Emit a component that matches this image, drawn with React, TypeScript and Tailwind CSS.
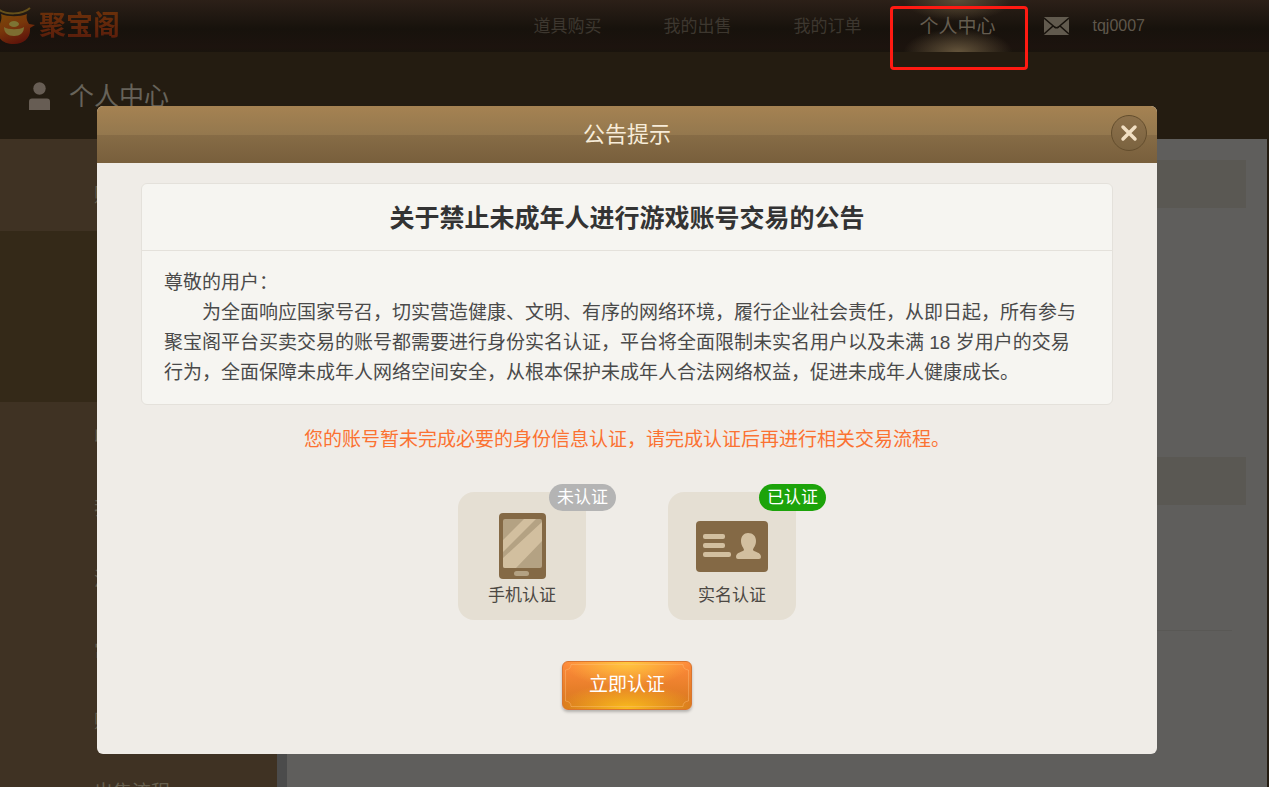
import { useState } from 'react';

const navItems = [
  { name: '道具购买', href: '#props' },
  { name: '我的出售', href: '#sales' },
  { name: '我的订单', href: '#orders' },
];

const sideItems = [
  { name: '收藏夹', href: '#favorites' },
  { name: '我的钱包', href: '#wallet' },
  { name: '消息中心', href: '#messages' },
  { name: '常见问题', href: '#faq' },
  { name: '购买流程', href: '#buying' },
  { name: '出售流程', href: '#selling' },
];

function PotLogo() {
  return (
    <svg width="36" height="38" viewBox="0 0 36 38" aria-hidden="true">
      <defs>
        <linearGradient id="pot" x1="0" y1="0" x2="0.5" y2="1">
          <stop offset="0" stopColor="#7a4a08" />
          <stop offset="0.5" stopColor="#78360b" />
          <stop offset="1" stopColor="#5f140a" />
        </linearGradient>
      </defs>
      <path d="M1 7 C8 10 20 10 27 7 C26 11 27 14 29 17 L35 18 L30 21 C31 31 24 37 14 37 C5 37 -2 33 -2 25 C-2 18 3 14 1 7Z" fill="url(#pot)" />
      <path d="M-2 2 C6 8 22 8 30 1" fill="none" stroke="#66501a" strokeWidth="2" />
      <path d="M4 20 C8 23 20 23 24 20 C24 26 20 29 14 29 C8 29 4 26 4 20Z" fill="#7d6d31" />
      <ellipse cx="14" cy="17" rx="5" ry="3" fill="#7d7434" />
    </svg>
  );
}

function UserIcon() {
  return (
    <svg width="22" height="28" viewBox="0 0 22 28" fill="#675d54" aria-hidden="true">
      <circle cx="10.500" cy="6.500" r="6.200" />
      <path d="M0 28 V19.500 Q0 16.500 3 16.500 H18 Q21 16.500 21 19.500 V28Z" />
    </svg>
  );
}

function MailIcon() {
  return (
    <svg width="25" height="18" viewBox="0 0 25 18" aria-hidden="true">
      <rect width="25" height="18" rx="1" fill="#615a4e" />
      <path d="M0 1 L10.500 10 Q12.500 11.500 14.500 10 L25 1 M0 17 L9 9 M25 17 L16 9" fill="none" stroke="#17120c" strokeWidth="1.600" />
    </svg>
  );
}

function PhoneIcon() {
  return (
    <svg width="47" height="66" viewBox="0 0 47 66" aria-hidden="true">
      <defs>
        <clipPath id="screen">
          <rect x="4" y="6" width="39" height="49" rx="2" />
        </clipPath>
      </defs>
      <rect width="47" height="66" rx="4" fill="#846945" />
      <g clipPath="url(#screen)">
        <rect x="4" y="6" width="39" height="49" fill="#b4a283" />
        <path d="M4 27 L25 6 H37 L4 39Z M4 45 L43 9 V28 L17 55 H4Z" fill="#d2bf9f" />
      </g>
      <rect x="15" y="58" width="15" height="5" rx="2.500" fill="#b4a283" />
    </svg>
  );
}

function IdCardIcon() {
  return (
    <svg width="72" height="51" viewBox="0 0 72 51" aria-hidden="true">
      <rect width="72" height="51" rx="4" fill="#846945" />
      <g fill="#d2bf9f">
        <rect x="7" y="13" width="22" height="5" rx="2" />
        <rect x="7" y="22" width="22" height="5" rx="2" />
        <rect x="7" y="31" width="28" height="5" rx="2" />
        <path d="M52 12 C57 12 60 15 60 20 C60 25 57 27 57 29 C58 31 65 31 65 36 Q65 38 63 38 H42 Q40 38 40 36 C40 31 47 31 48 29 C48 27 45 25 45 20 C45 15 48 12 52 12Z" />
      </g>
    </svg>
  );
}

interface VerifyCardProps {
  label: string;
  verified: boolean;
  children: React.ReactNode;
}

function VerifyCard({ label, verified, children }: VerifyCardProps) {
  return (
    <button type="button" className="relative w-32 h-32 pt-4 flex flex-col items-center rounded-2xl bg-[#e5dfd3] cursor-pointer">
      <span className="h-[76px] flex items-center">{children}</span>
      <span className="text-[17px] leading-6 text-[#4c4843]">{label}</span>
      <span
        className={`absolute -top-2 -right-[30px] px-2 rounded-full text-[17px] leading-[27px] text-white whitespace-nowrap ${
          verified ? 'bg-[#1ca30a]' : 'bg-[#b4b4b4]'
        }`}
      >
        {verified ? '已认证' : '未认证'}
      </span>
    </button>
  );
}

function NoticeDialog({ onClose }: { onClose: () => void }) {
  return (
    <div className="fixed inset-0 pt-[106px] pr-[15px] flex justify-center items-start">
      <section role="dialog" aria-labelledby="notice-title" className="w-[1060px] rounded-md overflow-hidden bg-[#efece7]">
        <header className="h-[57px] px-[10px] flex items-center bg-[linear-gradient(#a58252,#94784e_50%,#876c46_50%,#785f3c)]">
          <span className="w-9"></span>
          <h2 id="notice-title" className="flex-1 text-center text-[22px] leading-8 text-[#f7ecd9]">公告提示</h2>
          <button
            type="button"
            aria-label="关闭"
            onClick={onClose}
            className="w-9 h-9 mb-1 flex items-center justify-center rounded-full border border-[#634d2d] bg-linear-to-b from-[#8d714b] to-[#7b6340] cursor-pointer"
          >
            <svg width="18" height="18" viewBox="0 0 18 18" fill="none" stroke="#f1dfc3" strokeWidth="3.500" strokeLinecap="round" aria-hidden="true">
              <path d="M3 3 L15 15 M15 3 L3 15" />
            </svg>
          </button>
        </header>

        <div className="px-11 pt-5 pb-11 flex flex-col items-center">
          <article className="w-full rounded-md border border-[#e4e1db] bg-[#f6f5f1]">
            <h3 className="h-[67px] flex items-center justify-center border-b border-[#e4e1db] pt-1 text-[25px] font-bold text-[#333]">
              关于禁止未成年人进行游戏账号交易的公告
            </h3>
            <div className="pl-[22px] pr-7 pt-[17px] pb-4 text-[19px] leading-[30px] text-[#4a4a4a]">
              <p>尊敬的用户：</p>
              <p className="indent-[2em]">
                为全面响应国家号召，切实营造健康、文明、有序的网络环境，履行企业社会责任，从即日起，所有参与聚宝阁平台买卖交易的账号都需要进行身份实名认证，平台将全面限制未实名用户以及未满 18 岁用户的交易行为，全面保障未成年人网络空间安全，从根本保护未成年人合法网络权益，促进未成年人健康成长。
              </p>
            </div>
          </article>

          <p className="mt-5 text-[19px] leading-[30px] text-[#fb7232]">
            您的账号暂未完成必要的身份信息认证，请完成认证后再进行相关交易流程。
          </p>

          <div className="mt-[37px] flex gap-[82px]">
            <VerifyCard label="手机认证" verified={false}>
              <PhoneIcon />
            </VerifyCard>
            <VerifyCard label="实名认证" verified>
              <IdCardIcon />
            </VerifyCard>
          </div>

          <button
            type="button"
            className="relative mt-[41px] w-[130px] h-[49px] pb-[2px] rounded-md border border-[#d9752f] bg-[radial-gradient(ellipse_50%_55%_at_50%_0%,#ffc93e,transparent),radial-gradient(ellipse_55%_55%_at_50%_100%,#fabc1e,transparent),linear-gradient(#ff8a3c,#d5761b)] shadow-[0_2px_3px_rgba(0,0,0,0.25)] text-[19px] leading-6 text-white cursor-pointer"
          >
            <svg className="absolute inset-0" width="128" height="47" viewBox="0 0 128 47" fill="none" stroke="#ffc380" strokeOpacity="0.400" aria-hidden="true">
              <path d="M8 2.500 H120 Q120 7.500 125.500 8 V39 Q120 39.500 120 44.500 H8 Q8 39.500 2.500 39 V8 Q8 7.500 8 2.500Z" />
            </svg>
            立即认证
          </button>
        </div>
      </section>
    </div>
  );
}

export default function App() {
  const [isNoticeOpen, setIsNoticeOpen] = useState(true);

  return (
    <div className="h-screen overflow-hidden flex flex-col bg-[#241c11] font-['Liberation_Sans','Noto_Sans_CJK_SC',sans-serif]">
      <header className="h-[52px] shrink-0 pr-[124px] flex items-center justify-between bg-[linear-gradient(#2c2018,#17120c_55%,#1c130e_90%,#1a140d)]">
        <a href="#home" className="flex items-center gap-[3px]">
          <PotLogo />
          <span className="text-[27px] leading-8 font-bold bg-linear-to-b from-[#6b310a] to-[#581b0b] bg-clip-text text-transparent">聚宝阁</span>
        </a>

        <div className="flex items-center">
          <nav className="flex text-[17px] text-[#3d372f]">
            {navItems.map((item) => (
              <a key={item.name} href={item.href} className="w-[130px] h-[52px] pt-[2px] flex items-center justify-center">
                {item.name}
              </a>
            ))}
            <a
              href="#center"
              className="relative w-[130px] h-[52px] pt-[2px] flex items-center justify-center text-[19px] text-[#655d50] bg-[radial-gradient(ellipse_42%_40%_at_50%_0%,#5c4d36,transparent),radial-gradient(ellipse_42%_45%_at_50%_100%,#64543b,transparent)]"
            >
              个人中心
              <span className="absolute top-[6px] -left-[3px] w-[138px] h-16 rounded-sm border-3 border-[#ff1a12]"></span>
            </a>
          </nav>
          <a href="#mail" aria-label="邮件" className="ml-[21px]">
            <MailIcon />
          </a>
          <a href="#account" className="ml-6 text-base text-[#5f574b]">tqj0007</a>
        </div>
      </header>

      <div className="h-[87px] shrink-0 pl-[29px] flex items-center gap-[18px]">
        <UserIcon />
        <h1 className="text-[25px] leading-8 text-[#67635a]">个人中心</h1>
      </div>

      <div className="flex-1 min-h-0 flex pr-[2px]">
        <aside className="w-[277px] bg-[#3f3223] text-[19px] leading-[71px] text-[#67604f]">
          <a href="#account-info" className="block pt-[21px] pl-[94px]">账号信息</a>
          <div className="h-[171px] bg-[#342918]"></div>
          <nav>
            {sideItems.map((item) => (
              <a key={item.name} href={item.href} className="block pl-[94px]">
                {item.name}
              </a>
            ))}
          </nav>
        </aside>
        <main className="flex-1 border-l-10 border-[#4b4b4b] bg-[#5f5e5c] px-[21px] pt-[21px]">
          <div className="h-12 bg-[#5a5853]"></div>
          <div className="mt-[249px] h-12 bg-[#5a5853]"></div>
          <hr className="mt-[125px] mr-[14px] border-[#595855]" />
        </main>
      </div>

      {isNoticeOpen && <NoticeDialog onClose={() => setIsNoticeOpen(false)} />}
    </div>
  );
}
